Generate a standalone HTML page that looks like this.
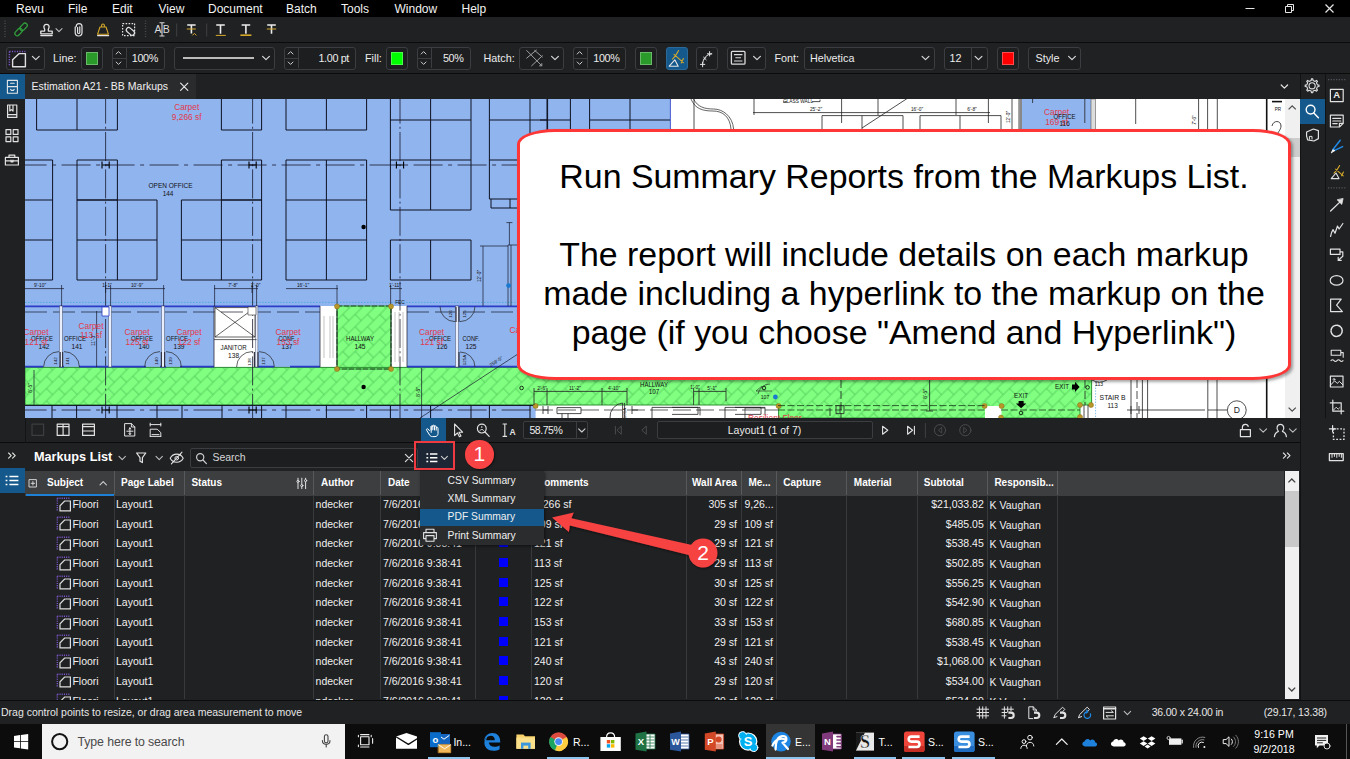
<!DOCTYPE html>
<html><head><meta charset="utf-8"><title>Revu</title>
<style>
*{box-sizing:border-box;margin:0;padding:0}
html,body{width:1350px;height:759px;overflow:hidden;background:#202123;font-family:"Liberation Sans",sans-serif;color:#fff}
.abs{position:absolute}
#menubar{left:0;top:0;width:1350px;height:17px;background:#000}
#menubar span{position:absolute;top:0;font-size:12px;line-height:18.600px;color:#f2f2f2}
#tb1{left:0;top:17px;width:1350px;height:26px;background:#202123;border-bottom:1px solid #0b0b0c}
#tb2{left:0;top:43px;width:1350px;height:31px;background:#202123;border-bottom:1px solid #0b0b0c}
#tb2 .bx{top:4px;height:22.5px;border:1px solid #3c3d40;border-radius:3px;background:#1d1e20}
#tb2 .bx i{position:absolute;left:4px;top:4px;right:4px;bottom:4px;border:1px solid rgba(255,255,255,.3)}
#tb2 .tx{top:4px;font-size:10.8px;line-height:22px;color:#ececec;white-space:nowrap}
#tabbar{left:0;top:74px;width:1300px;height:25px;background:#202123}
#doc{left:25px;top:99px;width:1260px;height:319px;background:#fff;overflow:hidden}
#vscroll{left:1285px;top:99px;width:15px;height:319px;background:#f0f0f0}
#callout{left:516.8px;top:128.7px;width:774.4px;height:251.2px;background:#fff;border:3px solid #ff3636;border-radius:38px/15px;box-shadow:2px 2px 3px rgba(0,0,0,.35);padding-top:25.4px;text-align:center;color:#000;font-size:33.9px;line-height:39px;white-space:nowrap}
#leftbar{left:0;top:99px;width:25px;height:371px;background:#202123}
#right1{left:1300px;top:74px;width:50px;height:626px;background:#202123;border-left:1px solid #111213}
#navbar{left:25px;top:418px;width:1275px;height:25px;background:#202123;border-bottom:1px solid #0b0b0c}
#navbar .nbx{top:3.400px;height:18px;border:1px solid #3c3d40;border-radius:2px;background:#1d1e20}
#navbar .ntx{top:3.400px;font-size:10.500px;line-height:18px;color:#ececec;white-space:nowrap}
#mlbar{left:0;top:443px;width:1300px;height:28px;background:#202123}
#table{left:25px;top:471px;width:1275px;height:229px;background:#202123;overflow:hidden}
#table .th{top:0;font-size:10px;font-weight:700;line-height:24px;color:#fff;white-space:nowrap}
#table .tr{left:0;width:1259px;height:16px;font-size:10.500px;line-height:16px;color:#f0f0f0;white-space:nowrap}
#table .tr span{position:absolute;top:0}
#table .tr i{position:absolute;width:9px;height:9px;background:#0000ff}
#menu{left:420px;top:471px;width:124px;height:74px;background:#2b2c2e;box-shadow:1px 1px 3px rgba(0,0,0,.5)}
#menu span{position:absolute;left:27.600px;font-size:10.300px;line-height:14px;color:#f0f0f0;white-space:nowrap}
#status{left:0;top:700px;width:1350px;height:24px;background:#202123;border-top:1px solid #0b0b0c}
#taskbar{left:0;top:724px;width:1350px;height:35px;background:#0c0c0c}
</style></head><body>
<div id="menubar" class="abs">
<span style="left:16px">Revu</span>
<span style="left:68px">File</span>
<span style="left:112px">Edit</span>
<span style="left:158.5px">View</span>
<span style="left:208px">Document</span>
<span style="left:286px">Batch</span>
<span style="left:341px">Tools</span>
<span style="left:394.5px">Window</span>
<span style="left:461.5px">Help</span>
<svg class="abs" style="left:1240px;top:0" width="110" height="17" viewBox="0 0 110 17" fill="none" stroke="#e6e6e6" stroke-width="1"><path d="M5.5 8.5h9"/><path d="M45.5 6.5h6v6h-6zM47.5 6.5v-2h6v6h-2"/><path d="M85.5 4.5l8 8M93.5 4.5l-8 8" stroke-width="1.2"/></svg>
</div>
<div id="tb1" class="abs">
<svg class="abs" style="left:0;top:0" width="300" height="25" viewBox="0 17 300 25" fill="none" stroke-linecap="round" stroke-linejoin="round">
<path d="M5 20.5v18M145.5 20.5v18" stroke="#4a4b4e" stroke-width="1.4" stroke-dasharray="1 1.6" stroke-linecap="butt"/>
<g stroke="#2f9e3a" stroke-width="1.25"><rect x="-2.3" y="-4.3" width="4.6" height="8.6" rx="2.3" transform="translate(23.6,26.9) rotate(43)"/><rect x="-2.3" y="-4.3" width="4.6" height="8.6" rx="2.3" transform="translate(18.6,32) rotate(43)"/></g>
<g stroke="#e4e4e4" stroke-width="1.3"><path d="M44.6 31.2c.4-1.6 .2-2.4-.5-3.3a2.6 2.6 0 1 1 4.8 0c-.7 .9-.9 1.7-.5 3.3h3.8v2.6h-11.4v-2.6z"/><path d="M40.8 35.6h11.4"/><path d="M56 28.6l3 3 3-3" stroke="#bdbdbd" stroke-width="1.1"/></g>
<path d="M75.2 27v5.6a3.4 3.4 0 0 0 6.8 0v-6a2.9 2.9 0 0 0-5.8 0h0a2.9 2.9 0 0 1 5.8 0M77.6 27.4v5a1.1 1.1 0 0 0 2.2 0v-5.6" stroke="#e4e4e4" stroke-width="1.2"/>
<path d="M76.2 26.6v6a2.4 2.4 0 0 0 4.8 0" stroke="#e4e4e4" stroke-width="0"/>
<path d="M100 27h6l2.4 7.2h-10.8zM101.6 27v-1.6a1.4 1.4 0 0 1 2.8 0V27" stroke="#d6a92b" stroke-width="1.1"/><path d="M97.6 35.6h11" stroke="#e4e4e4" stroke-width="1.3"/>
<rect x="122.6" y="23.6" width="12" height="12" stroke="#e4e4e4" stroke-width="1.2" stroke-dasharray="1.6 1.4" stroke-linecap="butt"/>
<rect x="-4.6" y="-2.4" width="9.2" height="4.8" rx="2.4" transform="translate(130.4,31.4) rotate(40)" fill="#202123" stroke="#e4e4e4" stroke-width="1.2"/>
<path d="M176.7 23.5v13M206.7 23.5v13" stroke="#3f4043" stroke-width="1" stroke-linecap="butt"/>
<g stroke="#ececec" stroke-width="1.6" stroke-linecap="butt"><path d="M187.2 25h8.4M191.4 25v8.6"/><path d="M216.2 25h8.6M220.5 25v8.8"/><path d="M241.6 25h8.6M245.9 25v8.8"/><path d="M267.2 25h8.6M271.5 25v8.8"/></g>
<g stroke="#d6a92b" stroke-width="1" stroke-linecap="butt"><path d="M186.8 29h9M192.4 35.4l2-2 2 2"/><path d="M215.8 35.4h10"/><path d="M240.4 35.2h11" stroke-width="1.6"/><path d="M266.8 29h9.4"/></g>
</svg>
<span class="abs" style="left:154.5px;top:6px;font-size:10.5px;line-height:12px;color:#dcdcdc;letter-spacing:1.2px">AB</span>
<svg class="abs" style="left:158px;top:5px" width="8" height="15" viewBox="0 0 8 15" fill="none" stroke="#d8d8d8" stroke-width="1.1"><path d="M1.5 .8h5M1.5 14h5M4 .8v13.2"/></svg>
</div>
<div id="tb2" class="abs">
<div class="bx abs" style="left:6px;width:38.5px"></div>
<div class="abs tx" style="left:53px">Line:</div>
<div class="bx abs" style="left:80.5px;width:22.0px"><i style="background:#2a9a2a"></i></div>
<div class="bx abs" style="left:112px;width:53px"></div><div class="abs" style="left:125.5px;top:5px;width:1px;height:20px;background:#3c3d40"></div><div class="abs" style="left:113px;top:14.800px;width:12.5px;height:1px;background:#3c3d40"></div><div class="abs tx" style="left:112px;width:46px;text-align:right;letter-spacing:-.35px">100%</div>
<div class="bx abs" style="left:174px;width:101px"></div>
<div class="bx abs" style="left:284px;width:72px"></div><div class="abs" style="left:298px;top:5px;width:1px;height:20px;background:#3c3d40"></div><div class="abs" style="left:285px;top:14.800px;width:13px;height:1px;background:#3c3d40"></div><div class="abs tx" style="left:284px;width:65px;text-align:right;letter-spacing:-.35px">1.00 pt</div>
<div class="abs tx" style="left:365px">Fill:</div>
<div class="bx abs" style="left:386px;width:22px"><i style="background:#00ff00"></i></div>
<div class="bx abs" style="left:417px;width:53.5px"></div><div class="abs" style="left:430.5px;top:5px;width:1px;height:20px;background:#3c3d40"></div><div class="abs" style="left:418px;top:14.800px;width:12.5px;height:1px;background:#3c3d40"></div><div class="abs tx" style="left:417px;width:46.5px;text-align:right;letter-spacing:-.35px">50%</div>
<div class="abs tx" style="left:483.5px">Hatch:</div>
<div class="bx abs" style="left:519px;width:45px"></div>
<div class="bx abs" style="left:573px;width:53px"></div><div class="abs" style="left:586.5px;top:5px;width:1px;height:20px;background:#3c3d40"></div><div class="abs" style="left:574px;top:14.800px;width:12.5px;height:1px;background:#3c3d40"></div><div class="abs tx" style="left:573px;width:46.5px;text-align:right;letter-spacing:-.35px">100%</div>
<div class="bx abs" style="left:635px;width:22px"><i style="background:#2a9a2a"></i></div>
<div class="bx abs" style="left:666px;width:22px;background:#14588c;border-color:#2a6a9a"></div>
<div class="bx abs" style="left:696px;width:22px"></div>
<div class="bx abs" style="left:727px;width:38.5px"></div>
<div class="abs tx" style="left:774.5px">Font:</div>
<div class="bx abs" style="left:803.5px;width:131.5px"></div>
<div class="abs tx" style="left:810px">Helvetica</div>
<div class="bx abs" style="left:944px;width:44px"></div>
<div class="abs" style="left:970.5px;top:4px;width:1px;height:22px;background:#3c3d40"></div>
<div class="abs tx" style="left:949.5px">12</div>
<div class="bx abs" style="left:996.5px;width:22.0px"><i style="background:#ff0000"></i></div>
<div class="bx abs" style="left:1027.5px;width:53.5px"></div>
<div class="abs tx" style="left:1035.5px">Style</div>
<svg class="abs" style="left:0;top:0" width="1350" height="30" viewBox="0 43 1350 30" fill="none" stroke-linecap="round" stroke-linejoin="round">
<path d="M9.4 51.600v14M9.400 51.600h16" stroke="#7b55c7" stroke-width="1.500" stroke-dasharray="1.200 1.300" stroke-linecap="butt"/>
<path d="M12.600 66.800v-7l6.600-6.200h6.200v13.200z" stroke="#dedede" stroke-width="1.400" fill="none"/>
<path d="M32.4 56.3l3.4 3.4 3.4-3.4" stroke="#d8d8d8" stroke-width="1.2" fill="none"/>
<path d="M116.1 54l2.4-2.4 2.4 2.4M116.1 62l2.4 2.4 2.4-2.4" stroke="#cfcfcf" stroke-width="1"/>
<path d="M288.20000000000005 54l2.4-2.4 2.4 2.4M288.20000000000005 62l2.4 2.4 2.4-2.4" stroke="#cfcfcf" stroke-width="1"/>
<path d="M421.20000000000005 54l2.4-2.4 2.4 2.4M421.20000000000005 62l2.4 2.4 2.4-2.4" stroke="#cfcfcf" stroke-width="1"/>
<path d="M577.2 54l2.4-2.4 2.4 2.4M577.2 62l2.4 2.4 2.4-2.4" stroke="#cfcfcf" stroke-width="1"/>
<path d="M183 58h71" stroke="#f0f0f0" stroke-width="1.4" stroke-linecap="butt"/>
<path d="M262.6 56.3l3.4 3.4 3.4-3.4" stroke="#d8d8d8" stroke-width="1.2" fill="none"/>
<path d="M526.700 50.500L541.800 65.800M526.700 58.100L536.400 50.100M534.700 50.500L542.300 57M531.600 65.800L542.300 55.800M541.800 63.600v2.200h-2.200" stroke="#a0a0a0" stroke-width="1"/>
<path d="M551.6 56.3l3.4 3.4 3.4-3.4" stroke="#d8d8d8" stroke-width="1.2" fill="none"/>
<path d="M678.6 50.6c-1.6 3.4-3.4 6.2-6.2 8.6M674 54.4l9.4 8.2M683.4 58.6l-2.2 4.4" stroke="#d6a92b" stroke-width="1.1"/><path d="M669.2 66.2l5.6-6.4 3.4 6.4z" stroke="#e6e6e6" stroke-width="1.1"/>
<path d="M702.6 64.6c.2-6 3.6-10.2 9-10.8M700.4 64.4h4.4M702.6 62.2v4.6M709.6 51.6v4.4M707.4 53.8h4.4M703.6 57.2l2.6 2.6M706.2 57.2l-2.6 2.6" stroke="#e0e0e0" stroke-width="1"/>
<rect x="731.4" y="51.4" width="13.6" height="12.8" rx="1" stroke="#dcdcdc" stroke-width="1.3"/><path d="M734 54.6h8.4M735.4 57.8h5.6M734 61h8.4" stroke="#dcdcdc" stroke-width="1.1" stroke-linecap="butt"/>
<path d="M753.6 56.3l3.4 3.4 3.4-3.4" stroke="#d8d8d8" stroke-width="1.2" fill="none"/>
<path d="M922.1 56.3l3.4 3.4 3.4-3.4" stroke="#d8d8d8" stroke-width="1.2" fill="none"/>
<path d="M975.1 56.3l3.4 3.4 3.4-3.4" stroke="#d8d8d8" stroke-width="1.2" fill="none"/>
<path d="M1068.6 56.3l3.4 3.4 3.4-3.4" stroke="#d8d8d8" stroke-width="1.2" fill="none"/>
</svg>
</div>
<div id="tabbar" class="abs">
<div class="abs" style="left:0;top:0;width:24.5px;height:25px;background:#14588c"></div>
<div class="abs" style="left:25px;top:0;width:171px;height:25px;background:#2a2b2d"></div>
<div class="abs" style="left:31.5px;top:0;font-size:10.5px;line-height:24px;color:#f0f0f0;white-space:nowrap">Estimation A21 - BB Markups</div>
<svg class="abs" style="left:0;top:0" width="1300" height="25" viewBox="0 74 1300 25" fill="none" stroke="#e6e6e6" stroke-linecap="round" stroke-linejoin="round">
<path d="M180.6 83.2l7.2 7.2M187.8 83.2l-7.2 7.2" stroke-width="1.2"/>
<path d="M7.4 80.4h10v12.8h-10zM7.4 86.6h10M10.6 83.2h3.6M10.6 89.4l.8 1h2l.8-1" stroke-width="1.1"/>
<path d="M1281.2 85l3.2 3.2 3.2-3.2" stroke-width="1.2"/>
</svg>
</div>
<div id="doc" class="abs"><svg width="1260" height="319" viewBox="25 99 1260 319" style="display:block" font-family="Liberation Sans, sans-serif">
<defs><pattern id="hb" width="17.46" height="17.46" patternUnits="userSpaceOnUse" patternTransform="translate(104.9,404.1) rotate(-45)"><path d="M0 0h17.46M0 8.73h17.46M0 17.46h17.46M4.66 0v8.73M13.39 8.73v8.73" stroke="#4fc658" stroke-width=".75" fill="none"/></pattern></defs>
<rect x="25" y="99" width="1260" height="319" fill="#fff"/>
<rect x="25" y="99" width="645.4" height="319" fill="#90b4ee"/>
<rect x="1021.8" y="99" width="69.4" height="40" fill="#90b4ee"/>
<path d="M214 306h42.6v61h-42.6zM320 306h17v61h-17zM391 306h16v61h-16zM535.6 405h250v13h-250z" fill="#fff"/>
<path d="M25 367.4H1091.6V405H1080V418H778.6V405H25zM337 306h54v63h-54z" fill="#80ff80"/><path d="M25 367.4H1091.6V405H1080V418H778.6V405H25zM337 306h54v63h-54z" fill="url(#hb)" stroke="#2d8f33" stroke-width="1"/>
<rect x="985" y="406" width="16.5" height="12" fill="#fff"/>
<path d="M36.6 98V130M77 98V130M117.4 98V130M36.6 130H117.4M221.4 98V130M261.6 98V130M221.4 130H261.6M286 98V130M326.4 98V130M366.6 98V130M286 130H366.6M25 160H52.6V280H25M25 200H52.6M25 240H52.6M77 160V200M117.4 160V200M77 160H117.4M77 200H117.4M77 200V280M117.4 200V280M157 200V280M77 200H157M77 240H157M77 280H157M221.4 160V200M261.6 160V200M221.4 160H261.6M221.4 200H261.6M181.4 200V280M221.4 200V280M261.6 200V280M181.4 200H261.6M181.4 240H261.6M181.4 280H261.6M286 160V280M326.4 160V280M366.6 160V280M286 160H366.6M286 200H366.6M286 240H366.6M286 280H366.6M390.4 98V210M430.6 98V210M471 98V210M390.4 120H471M390.4 160H471M390.4 210H471M390.4 240V280M430.6 240V280M471 240V280M390.4 240H471M390.4 280H471M489.4 98V199M530 98V160M547 98V140M489.4 120H547M489.4 160H530M489.4 199H520M491 199v9h26M510 199v9M547.6 98V130M570.4 98V130M540 120H570.4M589.6 98V130M630 98V130M589.6 120H670M25 405.4H535M52 405.4V418M76.6 405.4V418M117 405.4V418M157 405.4V418M182 405.4V418M222 405.4V418M261.6 405.4V418M286 405.4V418M326.4 405.4V418M366.6 405.4V418M390.4 405.4V418M430.6 405.4V418M471 405.4V418M489.4 405.4V418M530 405.4V418" stroke="#0e1020" stroke-width="1" fill="none"/>
<path d="M105.6 99V418M252.6 99V418M400 99V418" stroke="#16182a" stroke-width=".8" fill="none" stroke-dasharray="29 3.2 2 3.2" stroke-dashoffset="4.4"/>
<path d="M25 165H517M25 410H535" stroke="#16182a" stroke-width=".8" fill="none" stroke-dasharray="29 5.5 4 5.5" stroke-dashoffset="7.4"/>
<path d="M25 312H320M407 312H517" stroke="#16182a" stroke-width=".7" fill="none" stroke-dasharray="22 6"/>
<path d="M102.0 161.6v6.8M109.19999999999999 161.6v6.8M102.0 165h7.2" stroke="#000" stroke-width="1.1" fill="none"/>
<path d="M249.0 161.6v6.8M256.2 161.6v6.8M249.0 165h7.2" stroke="#000" stroke-width="1.1" fill="none"/>
<path d="M396.4 161.6v6.8M403.6 161.6v6.8M396.4 165h7.2" stroke="#000" stroke-width="1.1" fill="none"/>
<path d="M102.0 406.6v6.8M109.19999999999999 406.6v6.8M102.0 410h7.2" stroke="#000" stroke-width="1.1" fill="none"/>
<path d="M249.0 406.6v6.8M256.2 406.6v6.8M249.0 410h7.2" stroke="#000" stroke-width="1.1" fill="none"/>
<path d="M25 302.4H517" stroke="#4aa6e0" stroke-width=".8" stroke-dasharray="1.6 1.4" fill="none"/>
<path d="M25 306.4H320M407 306.4H517M25 366.6H43M59 366.6H64M79 366.6H146M160 366.6H166M180 366.6H214M256 366.6H274M290 366.6H320M407 366.6H517" stroke="#2a3cc8" stroke-width="1.6" fill="none"/>
<rect x="59.7" y="306" width="2.6" height="61" fill="#e8eefc" stroke="#55596a" stroke-width=".5"/>
<rect x="108.7" y="306" width="2.6" height="61" fill="#e8eefc" stroke="#55596a" stroke-width=".5"/>
<rect x="161.7" y="306" width="2.6" height="61" fill="#e8eefc" stroke="#55596a" stroke-width=".5"/>
<rect x="255.3" y="306" width="2.6" height="61" fill="#e8eefc" stroke="#55596a" stroke-width=".5"/>
<rect x="455.7" y="306" width="2.6" height="61" fill="#e8eefc" stroke="#55596a" stroke-width=".5"/>
<path d="M214 306v61M320 306v61M337 306v63M391 306v63M407 306v61" stroke="#2a2c3c" stroke-width=".8" fill="none"/>
<path d="M215 307.6h40v29.4h-40zM215 307.6l40 29.4M255 307.6l-40 29.4M214 339.6h42.6" stroke="#222" stroke-width=".7" fill="none"/>
<path d="M102 307h7v9h-7z" fill="#fff" stroke="#2a3cc8" stroke-width=".8"/>
<path d="M248 307h8v8h-8z" fill="#fff" stroke="#333" stroke-width=".6"/>
<path d="M324 316v42M330 316v42M333 316v42M395 312v50M399 312v50M403 312v50" stroke="#9a9a9a" stroke-width=".6" fill="none"/>
<path d="M337 306h54v63h-54z" stroke="#1e3a1e" stroke-width=".8" fill="none" stroke-dasharray="5 2"/>
<path d="M59 351.6A15.4 15.4 0 0 0 43.6 367M64 351.6A15.4 15.4 0 0 1 79.4 367M160 351.6A15.4 15.4 0 0 0 144.6 367M166 351.6A15.4 15.4 0 0 1 181.4 367M252 351.6A15.4 15.4 0 0 0 236.6 367M259 351.6A15.4 15.4 0 0 1 274.4 367M455 321.6A15 15 0 0 1 440 306.6M460 321.6A15 15 0 0 0 475 306.6M460 352A15 15 0 0 1 475 367" stroke="#222" stroke-width=".7" fill="none"/>
<path d="M60.2 352v15M62.6 352v15M161.4 352v15M164.6 352v15M254.4 352v15M258 352v15M456 307v15M459 307v15M459 352v15" stroke="#334" stroke-width="1.2" fill="none"/>
<path d="M25 288.6H64M61.6 285v21M105 288.6H165M105.6 285v8M110.6 285v21M163.6 285v21M214 288.6H258M214.6 285v21M252 285v8M256.6 285v21M286 288.6H338M337 285v21M390 288.6H402M390.6 285v21" stroke="#16182a" stroke-width=".7" fill="none"/>
<path d="M483 246V306M480 246h28M509.4 222.6V245M506.4 222.6h6M508 245V306M511 245V306M508 245h9M96.6 311V367M34 370V405M421.6 368V418M420 418L517 354.6" stroke="#16182a" stroke-width=".7" fill="none"/>
<circle cx="363.6" cy="227" r="2.2" fill="#000"/><circle cx="363.6" cy="387" r="2.2" fill="#000"/><circle cx="508.6" cy="285.6" r="2.4" fill="#1a7ad0"/>
<circle cx="337" cy="306.4" r="2.5" fill="#b8962a" stroke="#8a6c10" stroke-width=".5"/>
<circle cx="391" cy="306.4" r="2.5" fill="#b8962a" stroke="#8a6c10" stroke-width=".5"/>
<circle cx="337" cy="369" r="2.5" fill="#b8962a" stroke="#8a6c10" stroke-width=".5"/>
<circle cx="391" cy="369" r="2.5" fill="#b8962a" stroke="#8a6c10" stroke-width=".5"/>
<circle cx="535.6" cy="406" r="2.5" fill="#b8962a" stroke="#8a6c10" stroke-width=".5"/>
<circle cx="778.6" cy="406" r="2.5" fill="#b8962a" stroke="#8a6c10" stroke-width=".5"/>
<circle cx="984.6" cy="406" r="2.5" fill="#b8962a" stroke="#8a6c10" stroke-width=".5"/>
<circle cx="1001.6" cy="406" r="2.5" fill="#b8962a" stroke="#8a6c10" stroke-width=".5"/>
<circle cx="1001" cy="417.6" r="2.5" fill="#b8962a" stroke="#8a6c10" stroke-width=".5"/>
<circle cx="1080" cy="405" r="2.5" fill="#b8962a" stroke="#8a6c10" stroke-width=".5"/>
<circle cx="1091" cy="405" r="2.5" fill="#b8962a" stroke="#8a6c10" stroke-width=".5"/>
<circle cx="1080" cy="417" r="2.5" fill="#b8962a" stroke="#8a6c10" stroke-width=".5"/>
<text x="170.5" y="188.4" font-size="6.4" fill="#111" text-anchor="middle" textLength="44" lengthAdjust="spacingAndGlyphs">OPEN OFFICE</text>
<text x="168" y="196" font-size="6.4" fill="#111" text-anchor="middle" >144</text>
<text x="42" y="341.4" font-size="6.6" fill="#111" text-anchor="middle" textLength="22" lengthAdjust="spacingAndGlyphs">OFFICE</text>
<text x="44" y="348.6" font-size="6.6" fill="#111" text-anchor="middle" >142</text>
<text x="75" y="341.4" font-size="6.6" fill="#111" text-anchor="middle" textLength="22" lengthAdjust="spacingAndGlyphs">OFFICE</text>
<text x="77" y="348.6" font-size="6.6" fill="#111" text-anchor="middle" >141</text>
<text x="142" y="341.4" font-size="6.6" fill="#111" text-anchor="middle" textLength="22" lengthAdjust="spacingAndGlyphs">OFFICE</text>
<text x="144" y="348.6" font-size="6.6" fill="#111" text-anchor="middle" >140</text>
<text x="177" y="341.4" font-size="6.6" fill="#111" text-anchor="middle" textLength="22" lengthAdjust="spacingAndGlyphs">OFFICE</text>
<text x="179" y="348.6" font-size="6.6" fill="#111" text-anchor="middle" >139</text>
<text x="233.6" y="350.4" font-size="6.6" fill="#111" text-anchor="middle" textLength="26" lengthAdjust="spacingAndGlyphs">JANITOR</text>
<text x="233.6" y="357.6" font-size="6.6" fill="#111" text-anchor="middle" >138</text>
<text x="287" y="341.4" font-size="6.6" fill="#111" text-anchor="middle" textLength="17" lengthAdjust="spacingAndGlyphs">CONF.</text>
<text x="287" y="348.6" font-size="6.6" fill="#111" text-anchor="middle" >137</text>
<text x="360" y="341.4" font-size="6.6" fill="#111" text-anchor="middle" textLength="28" lengthAdjust="spacingAndGlyphs">HALLWAY</text>
<text x="360" y="348.6" font-size="6.6" fill="#111" text-anchor="middle" >145</text>
<text x="440" y="341.4" font-size="6.6" fill="#111" text-anchor="middle" textLength="22" lengthAdjust="spacingAndGlyphs">OFFICE</text>
<text x="442" y="348.6" font-size="6.6" fill="#111" text-anchor="middle" >126</text>
<text x="471" y="341.4" font-size="6.6" fill="#111" text-anchor="middle" textLength="17" lengthAdjust="spacingAndGlyphs">CONF.</text>
<text x="471" y="348.6" font-size="6.6" fill="#111" text-anchor="middle" >125</text>
<text x="186.7" y="110" font-size="8.4" fill="#e23a4c" text-anchor="middle" >Carpet</text>
<text x="186.7" y="119.6" font-size="8.4" fill="#e23a4c" text-anchor="middle" >9,266 sf</text>
<text x="36" y="335.4" font-size="8.4" fill="#e23a4c" text-anchor="middle" >Carpet</text>
<text x="36" y="345.0" font-size="8.4" fill="#e23a4c" text-anchor="middle" >121 sf</text>
<text x="91" y="328.6" font-size="8.4" fill="#e23a4c" text-anchor="middle" >Carpet</text>
<text x="91" y="338.20000000000005" font-size="8.4" fill="#e23a4c" text-anchor="middle" >113 sf</text>
<text x="137" y="335.4" font-size="8.4" fill="#e23a4c" text-anchor="middle" >Carpet</text>
<text x="137" y="345.0" font-size="8.4" fill="#e23a4c" text-anchor="middle" >125 sf</text>
<text x="189" y="335.4" font-size="8.4" fill="#e23a4c" text-anchor="middle" >Carpet</text>
<text x="189" y="345.0" font-size="8.4" fill="#e23a4c" text-anchor="middle" >122 sf</text>
<text x="288" y="335.4" font-size="8.4" fill="#e23a4c" text-anchor="middle" >Carpet</text>
<text x="288" y="345.0" font-size="8.4" fill="#e23a4c" text-anchor="middle" >153 sf</text>
<text x="431.6" y="335.4" font-size="8.4" fill="#e23a4c" text-anchor="middle" >Carpet</text>
<text x="431.6" y="345.0" font-size="8.4" fill="#e23a4c" text-anchor="middle" >121 sf</text>
<text x="522" y="333" font-size="8.4" fill="#e23a4c" text-anchor="middle" >Carpet</text>
<text x="522" y="342.6" font-size="8.4" fill="#e23a4c" text-anchor="middle" >2</text>
<text x="1056.6" y="115" font-size="8.4" fill="#e23a4c" text-anchor="middle" >Carpet</text>
<text x="1056.6" y="124.6" font-size="8.4" fill="#e23a4c" text-anchor="middle" >169 sf</text>
<text x="40" y="287" font-size="4.8" fill="#111" text-anchor="middle" >9'-10"</text>
<text x="107" y="287" font-size="4.8" fill="#111" text-anchor="middle" >1'-1"</text>
<text x="137" y="287" font-size="4.8" fill="#111" text-anchor="middle" >10'-9"</text>
<text x="233" y="287" font-size="4.8" fill="#111" text-anchor="middle" >7'-8"</text>
<text x="255.6" y="287" font-size="4.8" fill="#111" text-anchor="middle" >1'-0"</text>
<text x="303" y="287" font-size="4.8" fill="#111" text-anchor="middle" >16'-1"</text>
<text x="395" y="287" font-size="4.8" fill="#111" text-anchor="middle" >1'-11"</text>
<text x="400" y="303.6" font-size="4.8" fill="#111" text-anchor="middle" >FEC</text>
<text transform="translate(481,276) rotate(-90)" font-size="4.8" fill="#111" text-anchor="middle">12'-0"</text>
<text transform="translate(32,388) rotate(-90)" font-size="4.8" fill="#111" text-anchor="middle">8'-5"</text>
<text transform="translate(420,392) rotate(-90)" font-size="4.8" fill="#111" text-anchor="middle">8'-5"</text>
<text transform="translate(95,340) rotate(-90)" font-size="4.8" fill="#111" text-anchor="middle">11'-3"</text>
<text transform="translate(497,363) rotate(-33)" font-size="4.8" fill="#111" text-anchor="middle">259'-5"</text>
<text transform="translate(56.6,361) rotate(-90)" font-size="4.4" fill="#111" text-anchor="middle">142</text>
<text transform="translate(69,361) rotate(-90)" font-size="4.4" fill="#111" text-anchor="middle">141</text>
<text transform="translate(157.6,361) rotate(-90)" font-size="4.4" fill="#111" text-anchor="middle">140</text>
<text transform="translate(171.6,361) rotate(-90)" font-size="4.4" fill="#111" text-anchor="middle">139</text>
<text transform="translate(250.6,362) rotate(-90)" font-size="4.4" fill="#111" text-anchor="middle">138</text>
<text transform="translate(264.6,361) rotate(-90)" font-size="4.4" fill="#111" text-anchor="middle">137</text>
<text transform="translate(452,314) rotate(-90)" font-size="4.4" fill="#111" text-anchor="middle">126</text>
<text transform="translate(465.6,314) rotate(-90)" font-size="4.4" fill="#111" text-anchor="middle">125</text>
<text transform="translate(465.6,360) rotate(-90)" font-size="4.4" fill="#111" text-anchor="middle">125A</text>
<path d="M694 99V129M753 112.6H990M754 99v16M841.6 99V123M878 99V115M956 99V115M988.4 99V123M822 129V115.6H903V129M862 115.6V129M920 129V115.6H1001V129M960 115.6V129M862 128L907 98.6M1012 99V130M1019 99V130M1084.8 99V123M1032.6 99V103M1135.7 99V124M1198.6 99V130M1207.6 99V130M1217.3 99V130M783 102h4M812 101.6h8v-2" stroke="#222" stroke-width=".8" fill="none"/>
<path d="M691 99c4 10 12 12 22 12s17 6 18 18M693.6 99c4 8 11 10 20 10s19 7 20 20" stroke="#222" stroke-width=".7" fill="none"/>
<rect x="1019.4" y="99" width="2.6" height="31" fill="#888"/><rect x="1091" y="99" width="4.6" height="31" fill="#ddd" stroke="#444" stroke-width=".5"/>
<path d="M1266.7 99V418" stroke="#111" stroke-width="1.6"/><path d="M1272 101.6h10" stroke="#111" stroke-width="1.6"/><path d="M670.4 99V130" stroke="#2a3cc8" stroke-width=".8"/>
<text x="798" y="103.4" font-size="4.8" fill="#111" text-anchor="middle" >GLASS WALL</text>
<text x="816" y="110.6" font-size="4.8" fill="#111" text-anchor="middle" >25'-2"</text>
<text x="917" y="110.6" font-size="4.8" fill="#111" text-anchor="middle" >16'-0"</text>
<text x="972" y="110.6" font-size="4.8" fill="#111" text-anchor="middle" >6'-8"</text>
<text x="1278" y="111.2" font-size="4.6" fill="#111" text-anchor="middle" >PR</text>
<text transform="translate(1010,117) rotate(-90)" font-size="4.8" fill="#111" text-anchor="middle">12'-0"</text>
<text transform="translate(1196,120) rotate(-90)" font-size="4.8" fill="#111" text-anchor="middle" font-style="italic">7'-0"</text>
<path d="M1272 126c1-6 9-6 9 0c0 4-4 7-6 12" stroke="#333" stroke-width=".9" fill="none"/>
<text x="1064.6" y="119" font-size="6.4" fill="#111" text-anchor="middle" textLength="22" lengthAdjust="spacingAndGlyphs">OFFICE</text>
<text x="1064.6" y="126" font-size="6.4" fill="#111" text-anchor="middle" >116</text>
<path d="M534 391.4H627M534 388v17M547 388v17M602 388v17M627 388v17M693.6 391.4H726M693.6 388v17M699 388v17M726 388v13M543 406v8M548 406v8M543 410h5M557 407.6h24v6h-24zM562 413.6v4.4M568 413.6v4.4M622.6 403v15M624.6 403v15M632 406v8M632 410h6M610 418A14 14 0 0 1 622.6 403M652 418v-10.6h48v8M672 407.4h26v7h-26M725 418v-10.6h40v8M735 407.4h26v7h-26M929.6 380V411M926 411h7M830 408v8M836 405.6h8v8h-8zM840 405.6v8M1131 380V418M1142.4 380V418M1147.6 380V418M1207.8 380V418M1217 380V418M1127 410H1205M1208 410H1227M1131 406v8M1139 406v8M1092 380A15 15 0 0 0 1107 380M1084 405v13M1088 405v13" stroke="#222" stroke-width=".8" fill="none"/>
<path d="M535 410H778" stroke="#222" stroke-width=".7" stroke-dasharray="18 5" fill="none"/>
<path d="M778 405.6H985M778 410H985M1001 410H1080" stroke="#1c3a1c" stroke-width=".8" stroke-dasharray="7 2.5" fill="none"/>
<path d="M841 380V418M1085 380V405M1137 380V418" stroke="#222" stroke-width=".8" stroke-dasharray="8 3" fill="none"/>
<path d="M1095.6 382V418" stroke="#4aa6e0" stroke-width=".7" stroke-dasharray="1.4 1.4" fill="none"/>
<circle cx="1236.8" cy="410.2" r="9.4" fill="#fff" stroke="#222" stroke-width=".8"/>
<text x="1236.8" y="413.4" font-size="8.6" fill="#222" text-anchor="middle" >D</text>
<text x="542" y="390" font-size="4.8" fill="#111" text-anchor="middle" >2'-6"</text>
<text x="575" y="390" font-size="4.8" fill="#111" text-anchor="middle" >11'-2"</text>
<text x="614" y="390" font-size="4.8" fill="#111" text-anchor="middle" >4'-10"</text>
<text x="654" y="386.6" font-size="6.4" fill="#111" text-anchor="middle" textLength="28" lengthAdjust="spacingAndGlyphs">HALLWAY</text>
<text x="654" y="393.6" font-size="6.4" fill="#111" text-anchor="middle" >107</text>
<text x="695" y="389" font-size="4.8" fill="#111" text-anchor="middle" >1'-0"</text>
<text x="712" y="390" font-size="4.8" fill="#111" text-anchor="middle" >5'-1"</text>
<text x="765" y="399" font-size="5" fill="#111" text-anchor="middle" >107</text>
<text x="1021" y="398.4" font-size="6.4" fill="#111" text-anchor="middle" textLength="14" lengthAdjust="spacingAndGlyphs">EXIT</text>
<text x="1062" y="389" font-size="6.4" fill="#111" text-anchor="middle" textLength="14" lengthAdjust="spacingAndGlyphs">EXIT</text>
<text x="1112.6" y="400.4" font-size="6.4" fill="#111" text-anchor="middle" textLength="26" lengthAdjust="spacingAndGlyphs">STAIR B</text>
<text x="1112.6" y="407.6" font-size="6.4" fill="#111" text-anchor="middle" >113</text>
<text x="1099" y="386" font-size="5" fill="#111" text-anchor="middle" >113</text>
<text transform="translate(625.6,413) rotate(-90)" font-size="4.4" fill="#111" text-anchor="middle">101A</text>
<text transform="translate(927,394) rotate(-90)" font-size="4.8" fill="#111" text-anchor="middle">8'-5"</text>
<path d="M1018.6 401h5v2.6h2.6l-5.1 4.6l-5.1-4.6h2.6zM1072 384.4h3v-2.6l4.6 5.1l-4.6 5.1v-2.6h-3z" fill="#000"/>
<circle cx="521.6" cy="388" r="1.8" fill="none" stroke="#000" stroke-width=".8"/><circle cx="764" cy="388" r="1.8" fill="none" stroke="#000" stroke-width=".8"/><circle cx="1021" cy="413" r="1.8" fill="none" stroke="#000" stroke-width=".8"/><circle cx="1087.6" cy="387.4" r="1.8" fill="none" stroke="#000" stroke-width=".8"/>
<circle cx="775.4" cy="397" r="2.4" fill="#1a7ad0"/>
<path d="M745 418v-10h20" stroke="#222" stroke-width=".7" fill="none"/><path d="M762 386l-6 5h16M758 394A12 12 0 0 1 770 384" stroke="#222" stroke-width=".6" fill="none"/>
<text x="748" y="420.6" font-size="8.4" fill="#e23a4c">Resilient Floor</text>
</svg></div>
<div id="vscroll" class="abs"><div class="abs" style="left:0;top:38.5px;width:15px;height:19.5px;background:#cdcdcd"></div><svg class="abs" style="left:0;top:0" width="15" height="319" viewBox="0 0 15 319" fill="none" stroke="#505050" stroke-width="1.3"><path d="M3.6 10.4l3.6-3.6 3.6 3.6M3.6 308.6l3.6 3.6 3.6-3.6"/></svg></div>
<div id="callout" class="abs"><p>Run Summary Reports from the Markups List.</p><p>&nbsp;</p><p>The report will include details on each markup</p><p>made including a hyperlink to the markup on the</p><p>page (if you choose "Amend and Hyperlink")</p></div>
<div id="leftbar" class="abs"><svg width="25" height="371" viewBox="0 99 25 371" fill="none" stroke="#e2e2e2" stroke-width="1.2" stroke-linejoin="round" stroke-linecap="round">
<path d="M7.6 105h9.2v12.4h-9.2zM7.6 114.6h9.2M9.8 105v6l1.6-1.4 1.6 1.4v-6"/>
<path d="M6 129.6h4.8v4.8h-4.8zM13.2 129.6h4.8v4.8h-4.8zM6 136.8h4.8v4.8h-4.8zM13.2 136.8h4.8v4.8h-4.8z"/>
<path d="M5.4 157.4h13v7.6h-13zM9 157.4v-2.2h5.8v2.2M5.4 160.8h13M11 160v1.8h2v-1.8"/>
<path d="M8.6 452.6l2.6 2.6-2.6 2.6M12.6 452.6l2.6 2.6-2.6 2.6" stroke-width="1.1"/>
</svg></div>
<div class="abs" style="left:0;top:468px;width:24.5px;height:24.8px;background:#14588c;z-index:2"><svg width="25" height="25" viewBox="0 0 25 25" fill="none" stroke="#fff" stroke-width="1.5"><path d="M9.4 8.4h9M9.4 12.4h9M9.4 16.4h9"/><path d="M5.6 8.4h1.8M5.6 12.4h1.8M5.6 16.4h1.8"/></svg></div>
<div id="right1" class="abs"></div>
<div class="abs" style="left:1325px;top:74px;width:1px;height:344px;background:#111213"></div>
<div class="abs" style="left:1300px;top:99px;width:25px;height:24.6px;background:#14588c"></div>
<svg class="abs" style="left:1300px;top:74px" width="50" height="400" viewBox="1300 74 50 400" fill="none" stroke="#e2e2e2" stroke-width="1.2" stroke-linejoin="round" stroke-linecap="round">
<path d="M1317.4 84.9L1319.0 85.1L1319.0 86.5L1317.4 86.7L1316.5 88.9L1317.5 90.2L1316.5 91.2L1315.2 90.2L1313.0 91.1L1312.8 92.7L1311.4 92.7L1311.2 91.1L1309.0 90.2L1307.7 91.2L1306.7 90.2L1307.7 88.9L1306.8 86.7L1305.2 86.5L1305.2 85.1L1306.8 84.9L1307.7 82.7L1306.7 81.4L1307.7 80.4L1309.0 81.4L1311.2 80.5L1311.4 78.9L1312.8 78.9L1313.0 80.5L1315.2 81.4L1316.5 80.4L1317.5 81.4L1316.5 82.7Z" stroke-width="1.1"/><circle cx="1312.1" cy="85.8" r="3.1" stroke-width="1.1"/>
<circle cx="1310.6" cy="109.6" r="4.4" stroke="#fff" stroke-width="1.4"/><path d="M1313.8 113l4.6 4.8" stroke="#fff" stroke-width="1.4"/>
<path d="M1306.6 132l6.8-3 5 1.6v8l-4.4 2.4-6.4-1.2c-1-2.6-1.4-5-1-7.800z"/><path d="M1309.4 139.200v-2.800h2.6v2.600" stroke-width="1"/>
<path d="M1328 79.600h18.500M1328 187.800h18.500" stroke="#55565a" stroke-width="1.2" stroke-dasharray="1.2 1.5" stroke-linecap="butt"/>
<rect x="1330.4" y="89.400" width="12.800" height="12.200" stroke-width="1.2"/>
<path d="M1330.4 115.200h12.800v8.200l-3.800 3.600h-9zM1343.200 123.400h-3.800v3.600M1332.800 118.400h8M1332.800 121h8M1332.800 123.600h4.400"/>
<path d="M1340.200 140.200l-7.400 9.600M1342.600 146.600l-8 3.800" stroke="#1e8ae6" stroke-width="1.500"/><path d="M1331.400 152.600l1.400-2.800 1.800.600z" stroke="#fff" fill="#fff" stroke-width=".8"/>
<path d="M1339.600 165.600c-1.400 3-3 5.400-5.600 7.600M1335.600 169.200l7.600 6.600M1343.400 172l-1.800 3.800" stroke="#d6a92b" stroke-width="1.100"/><path d="M1331.200 178.600l4.800-5.600 3 5.600z" stroke-width="1.100"/>
<path d="M1330.600 211l10-9.600" stroke-width="1.300"/><path d="M1343 198.800l-1.200 5.600-4.400-4.400z" fill="#e2e2e2" stroke-width=".8"/>
<path d="M1330.600 236.400c.4-2.800 1.200-5 2.400-6.800l2 3.600 2.500-7.200 1.600 3 3.800-5.500"/>
<path d="M1330.400 249.200h9.600v5.200h-9.600zM1340 251.800h2.800v4.400l-4.600 4.200M1338.200 257.400v3h3" stroke-width="1.200"/>
<ellipse cx="1336.600" cy="280.400" rx="6.400" ry="4.800"/>
<path d="M1330.600 299.200h10.600l-4.600 6 5.800 6.400h-11.800z"/>
<circle cx="1336.600" cy="330.800" r="5.600" stroke-width="1.500" stroke-dasharray="3.300 1.100"/>
<path d="M1331.200 350.200h9.600v5h-9.600zM1340.800 352.600h2.400v4.600M1331 360.600c1-1.200 2-1.200 3 0s2 1.200 3 0 2-1.200 3 0 2 1.200 3 0" stroke-width="1.100"/>
<rect x="1330.400" y="376.200" width="12.600" height="10.800" stroke-width="1.200"/><path d="M1330.600 385l4-4.200 2.600 2.600 2.200-2 3.400 3.400" stroke-width="1"/><circle cx="1334" cy="379.400" r=".9" stroke-width=".8"/>
<path d="M1332.800 400.200v11h11M1330.200 402.800h11v11" stroke-width="1.200"/><path d="M1333.400 410.200l2.800-3 2 2 1.400-1.400" stroke-width=".9"/>
<path d="M1333.400 428.800h10.600v10.600h-10.600z" stroke-width="1.300" stroke-dasharray="1.800 1.600" stroke-linecap="butt"/><path d="M1329.400 428.800h6.400M1332.600 425.600v6.400" stroke-width="1.200"/>
<rect x="1329.400" y="453.600" width="13.800" height="7" stroke-width="1.300"/><path d="M1332 454v3.400M1334.400 454v2.400M1336.800 454v3.400M1339.200 454v2.400M1341.400 454v3.400" stroke-width="1"/>
</svg>
<span class="abs" style="left:1330.400px;top:89.400px;width:12.800px;text-align:center;font-size:9.500px;line-height:12.600px;font-weight:700;color:#eee">A</span>
<div id="navbar" class="abs">
<div class="abs" style="left:396px;top:0;width:25.4px;height:23px;background:#14588c"></div>
<div class="nbx abs" style="left:498.400px;width:65px"></div><div class="abs" style="left:550.500px;top:3.400px;width:1px;height:18px;background:#3c3d40"></div>
<div class="abs ntx" style="left:504.400px;letter-spacing:-.45px">58.75%</div>
<div class="nbx abs" style="left:631.500px;width:216px"></div>
<div class="abs ntx" style="left:631.500px;width:216px;text-align:center">Layout1 (1 of 7)</div>
<svg class="abs" style="left:0;top:0" width="1275" height="25" viewBox="25 418 1275 25" fill="none" stroke="#e2e2e2" stroke-width="1.200" stroke-linejoin="round" stroke-linecap="round">
<rect x="32" y="424.200" width="11.600" height="11.200" stroke="#3d3e41"/>
<path d="M57.200 424.200h11.800v11.200h-11.800zM63.100 424.200v11.200M57.200 426.600h11.800" />
<path d="M82.600 424.200h11.800v11.200h-11.800zM82.600 426.600h11.800M82.600 431h11.800"/>
<path d="M125 423.600h6.400l3.400 3.400v9h-9.800zM131.400 423.600v3.400h3.400M129.900 428v6.400M126.800 431.200h6.200M129.900 428l-1 1M129.900 428l1 1M129.900 434.400l-1-1M129.900 434.400l1-1" stroke-width="1"/>
<path d="M150.200 423.200v2.800M160.800 423.200v2.800M150.200 424.600h10.600M150.200 436.400v-7.200h7l3.600 3.400v3.800M150.200 436.400h10.600M152 434.600h7" stroke-width="1"/>
<path d="M429.400 430.600l-1.400-1.600c-.8-.8-2 .2-1.400 1.200l3 4.800c.6 1 1.600 1.600 2.800 1.600h2.600c1.800 0 3-1.400 3-3v-5.400c0-1.200-1.700-1.200-1.700 0v-1.400c0-1.200-1.700-1.200-1.700 0v-.8c0-1.200-1.700-1.200-1.700 0v.6c0-1.200-1.700-1.200-1.700 0v5.800M431.100 426.600v3.400M432.800 426v3.800M434.500 426.800v3.200M436.200 428.200v2" stroke="#fff" stroke-width="1"/>
<path d="M454.600 424v11.600l2.800-2.800 2 4 1.600-.8-2-3.800h3.600z" stroke-width="1.100"/>
<circle cx="481.800" cy="428.600" r="4.400"/><path d="M485 432l4.200 4.400"/><path d="M480 430.400c.4-1.400 3.200-1.400 3.600 0M481.800 426.400v1.200" stroke-width=".9"/>
<path d="M503 424h3.600M503 436.400h3.600M504.800 424v12.400" stroke-width="1.100"/>
<path d="M1282 419" />
<path d="M578.600 428.800l3.200 3.200 3.200-3.200" stroke="#cfcfcf" stroke-width="1.100"/>
<path d="M615.400 426.400v7.600M621 426.400l-4 3.800 4 3.800zM646 426.400l-4.200 3.800 4.200 3.800z" stroke="#4a4b4e" stroke-width="1"/>
<path d="M882.600 426.200l5.200 4-5.200 4zM907.600 426.200l5 4-5 4zM914.400 426.200v8" stroke-width="1.100"/>
<path d="M925.400 423.400v14" stroke="#3f4043" stroke-width="1"/>
<circle cx="940" cy="430.200" r="5.600" stroke="#4a4b4e" stroke-width="1"/><path d="M941.400 427.600l-3 2.600 3 2.600z" stroke="#4a4b4e" stroke-width=".9"/><circle cx="965.300" cy="430.200" r="5.600" stroke="#4a4b4e" stroke-width="1"/><path d="M964 427.600l3 2.600-3 2.600z" stroke="#4a4b4e" stroke-width=".9"/>
<path d="M1240.400 429.600h10v7h-10zM1242.400 429.600v-2.400c0-3.600 5.400-3.600 5.800-.8" stroke-width="1.200"/><path d="M1259.800 428.800l3.400 3.400 3.400-3.400" stroke="#bdbdbd" stroke-width="1.100"/>
<path d="M1274.400 436.600c.4-3.200 2-4.400 4-5.200c-2.600-2.400-1.400-7 2-7s4.600 4.600 2 7c2 .8 3.600 2 4 5.200" stroke-width="1.200"/><path d="M1289.400 428.800l3.400 3.400 3.400-3.400" stroke="#bdbdbd" stroke-width="1.100"/>
</svg>
<span class="abs" style="left:484.400px;top:8.600px;font-size:8.500px;line-height:10px;font-weight:700;color:#e2e2e2">A</span>
</div>
<div class="abs" style="left:24.500px;top:418px;width:1px;height:25px;background:#131415"></div><div class="abs" style="left:0;top:442px;width:25px;height:1px;background:#0b0b0c;z-index:1"></div>
<div id="mlbar" class="abs">
<div class="abs" style="left:34px;top:1.400px;font-size:12.700px;font-weight:700;line-height:26px;color:#fff;white-space:nowrap">Markups List</div>
<div class="abs" style="left:190.400px;top:5.400px;width:227.800px;height:19.600px;border:1px solid #3c3d40;border-radius:2px;background:#1d1e20"></div>
<div class="abs" style="left:212.400px;top:1.400px;font-size:10.500px;line-height:26.400px;color:#d8d8d8">Search</div>
<div class="abs" style="left:418.400px;top:0;width:35px;height:26px;background:#1d2635"></div><div class="abs" style="left:414.400px;top:-1.600px;width:40.400px;height:28.600px;border:2px solid #ee3a40"></div>
<svg class="abs" style="left:0;top:0" width="1300" height="27" viewBox="0 441.800 1300 27" fill="none" stroke="#e2e2e2" stroke-width="1.200" stroke-linejoin="round" stroke-linecap="round">
<path d="M119 455.200l3.200 3.200 3.200-3.200M156 455.200l3.200 3.200 3.200-3.200" stroke="#bdbdbd" stroke-width="1.100"/>
<path d="M136.600 451.800h9.200l-3.400 4.600v5l-2.400-1.400v-3.600z"/>
<path d="M170.200 457c3-5.400 10-5.400 13 0c-3 5.400-10 5.400-13 0zM182 451l-10.600 11.600" stroke-width="1.100"/><circle cx="176.700" cy="457" r="1.800" stroke-width="1"/>
<circle cx="200.200" cy="456" r="3.600" stroke="#cfcfcf"/><path d="M203 458.800l3.400 3.600" stroke="#cfcfcf"/>
<path d="M405.400 453.200l7.200 7.200M412.600 453.200l-7.200 7.200" stroke="#d8d8d8"/>
<path d="M430 452.800h7.400M430 456.600h7.400M430 460.400h7.400" stroke="#fff" stroke-width="1.500" stroke-linecap="butt"/><path d="M426.400 452.800h1.800M426.400 456.600h1.800M426.400 460.400h1.800" stroke="#fff" stroke-width="1.500" stroke-linecap="butt"/>
<path d="M441.400 455.200l3 3 3-3" stroke="#d0d0d0" stroke-width="1.100"/>
<path d="M1283.400 451.800l2.600 2.600-2.600 2.600M1287.400 451.800l2.600 2.600-2.600 2.600M8.600 451.800l2.600 2.600-2.600 2.600M12.600 451.800l2.600 2.600-2.600 2.600" stroke-width="1.100"/>
</svg>
<div class="abs" style="left:465px;top:-2.600px;width:28.600px;height:28.600px;border-radius:50%;background:#f74343;box-shadow:1px 1px 2px rgba(0,0,0,.5);color:#fff;font-size:21px;line-height:28.600px;text-align:center">1</div>
</div>
<div id="table" class="abs">
<div class="abs" style="left:0;top:0;width:1259px;height:25px;background:#3d3e40"></div>
<div class="abs" style="left:0.600px;top:23px;width:88.800px;height:1.600px;background:#1e80d4"></div>
<div class="abs" style="left:88.9px;top:0;width:1px;height:25px;background:#58595b"></div><div class="abs" style="left:88.9px;top:24.400px;width:1px;height:204px;background:#38393b"></div>
<div class="abs" style="left:158.9px;top:0;width:1px;height:25px;background:#58595b"></div><div class="abs" style="left:158.9px;top:24.400px;width:1px;height:204px;background:#38393b"></div>
<div class="abs" style="left:288.1px;top:0;width:1px;height:25px;background:#58595b"></div><div class="abs" style="left:288.1px;top:24.400px;width:1px;height:204px;background:#38393b"></div>
<div class="abs" style="left:354.9px;top:0;width:1px;height:25px;background:#58595b"></div><div class="abs" style="left:354.9px;top:24.400px;width:1px;height:204px;background:#38393b"></div>
<div class="abs" style="left:450.1px;top:0;width:1px;height:25px;background:#58595b"></div><div class="abs" style="left:450.1px;top:24.400px;width:1px;height:204px;background:#38393b"></div>
<div class="abs" style="left:506.3px;top:0;width:1px;height:25px;background:#58595b"></div><div class="abs" style="left:506.3px;top:24.400px;width:1px;height:204px;background:#38393b"></div>
<div class="abs" style="left:660.5px;top:0;width:1px;height:25px;background:#58595b"></div><div class="abs" style="left:660.5px;top:24.400px;width:1px;height:204px;background:#38393b"></div>
<div class="abs" style="left:716.1px;top:0;width:1px;height:25px;background:#58595b"></div><div class="abs" style="left:716.1px;top:24.400px;width:1px;height:204px;background:#38393b"></div>
<div class="abs" style="left:750.8px;top:0;width:1px;height:25px;background:#58595b"></div><div class="abs" style="left:750.8px;top:24.400px;width:1px;height:204px;background:#38393b"></div>
<div class="abs" style="left:821.2px;top:0;width:1px;height:25px;background:#58595b"></div><div class="abs" style="left:821.2px;top:24.400px;width:1px;height:204px;background:#38393b"></div>
<div class="abs" style="left:891.5px;top:0;width:1px;height:25px;background:#58595b"></div><div class="abs" style="left:891.5px;top:24.400px;width:1px;height:204px;background:#38393b"></div>
<div class="abs" style="left:961.8px;top:0;width:1px;height:25px;background:#58595b"></div><div class="abs" style="left:961.8px;top:24.400px;width:1px;height:204px;background:#38393b"></div>
<div class="abs" style="left:1031.8px;top:0;width:1px;height:25px;background:#58595b"></div><div class="abs" style="left:1031.8px;top:24.400px;width:1px;height:204px;background:#38393b"></div>
<div class="abs th" style="left:22.0px">Subject</div>
<div class="abs th" style="left:96.0px">Page Label</div>
<div class="abs th" style="left:166.4px">Status</div>
<div class="abs th" style="left:296.0px">Author</div>
<div class="abs th" style="left:363.0px">Date</div>
<div class="abs th" style="left:512.0px">Comments</div>
<div class="abs th" style="left:667.0px">Wall Area</div>
<div class="abs th" style="left:723.4px">Me...</div>
<div class="abs th" style="left:758.3px">Capture</div>
<div class="abs th" style="left:828.8px">Material</div>
<div class="abs th" style="left:898.8px">Subtotal</div>
<div class="abs th" style="left:969.4px">Responsib...</div>
<div class="abs tr" style="top:25.0px"><span style="left:47.400px">Floori</span><span style="left:91px">Layout1</span><span style="left:290.600px">ndecker</span><span style="left:358px">7/6/2016 9:38:41</span><i style="left:474px;top:3px"></i><span style="left:509px">9,266 sf</span><span style="left:600px;width:112px;text-align:right">305 sf</span><span style="left:719.400px">9,26...</span><span style="left:860px;width:98.800px;text-align:right">$21,033.82</span><span style="left:964.600px;top:1px">K Vaughan</span><svg class="abs" style="left:31px;top:-0.500px" width="16" height="16" viewBox="0 0 16 16" fill="none"><path d="M1.300 2.300v12.600M1.300 2.300h13" stroke="#7b55c7" stroke-width="1.400" stroke-dasharray="1.100 1.100"/><path d="M4 14.800v-5l4.600-4.800h5.800v9.800z" stroke="#dedede" stroke-width="1.200"/></svg></div>
<div class="abs tr" style="top:44.7px"><span style="left:47.400px">Floori</span><span style="left:91px">Layout1</span><span style="left:290.600px">ndecker</span><span style="left:358px">7/6/2016 9:38:41</span><i style="left:474px;top:3px"></i><span style="left:509px">109 sf</span><span style="left:600px;width:112px;text-align:right">29 sf</span><span style="left:719.400px">109 sf</span><span style="left:860px;width:98.800px;text-align:right">$485.05</span><span style="left:964.600px;top:1px">K Vaughan</span><svg class="abs" style="left:31px;top:-0.500px" width="16" height="16" viewBox="0 0 16 16" fill="none"><path d="M1.300 2.300v12.600M1.300 2.300h13" stroke="#7b55c7" stroke-width="1.400" stroke-dasharray="1.100 1.100"/><path d="M4 14.800v-5l4.600-4.800h5.800v9.800z" stroke="#dedede" stroke-width="1.200"/></svg></div>
<div class="abs tr" style="top:64.3px"><span style="left:47.400px">Floori</span><span style="left:91px">Layout1</span><span style="left:290.600px">ndecker</span><span style="left:358px">7/6/2016 9:38:41</span><i style="left:474px;top:3px"></i><span style="left:509px">121 sf</span><span style="left:600px;width:112px;text-align:right">29 sf</span><span style="left:719.400px">121 sf</span><span style="left:860px;width:98.800px;text-align:right">$538.45</span><span style="left:964.600px;top:1px">K Vaughan</span><svg class="abs" style="left:31px;top:-0.500px" width="16" height="16" viewBox="0 0 16 16" fill="none"><path d="M1.300 2.300v12.600M1.300 2.300h13" stroke="#7b55c7" stroke-width="1.400" stroke-dasharray="1.100 1.100"/><path d="M4 14.800v-5l4.600-4.800h5.800v9.800z" stroke="#dedede" stroke-width="1.200"/></svg></div>
<div class="abs tr" style="top:84.0px"><span style="left:47.400px">Floori</span><span style="left:91px">Layout1</span><span style="left:290.600px">ndecker</span><span style="left:358px">7/6/2016 9:38:41</span><i style="left:474px;top:3px"></i><span style="left:509px">113 sf</span><span style="left:600px;width:112px;text-align:right">29 sf</span><span style="left:719.400px">113 sf</span><span style="left:860px;width:98.800px;text-align:right">$502.85</span><span style="left:964.600px;top:1px">K Vaughan</span><svg class="abs" style="left:31px;top:-0.500px" width="16" height="16" viewBox="0 0 16 16" fill="none"><path d="M1.300 2.300v12.600M1.300 2.300h13" stroke="#7b55c7" stroke-width="1.400" stroke-dasharray="1.100 1.100"/><path d="M4 14.800v-5l4.600-4.800h5.800v9.800z" stroke="#dedede" stroke-width="1.200"/></svg></div>
<div class="abs tr" style="top:103.6px"><span style="left:47.400px">Floori</span><span style="left:91px">Layout1</span><span style="left:290.600px">ndecker</span><span style="left:358px">7/6/2016 9:38:41</span><i style="left:474px;top:3px"></i><span style="left:509px">125 sf</span><span style="left:600px;width:112px;text-align:right">30 sf</span><span style="left:719.400px">125 sf</span><span style="left:860px;width:98.800px;text-align:right">$556.25</span><span style="left:964.600px;top:1px">K Vaughan</span><svg class="abs" style="left:31px;top:-0.500px" width="16" height="16" viewBox="0 0 16 16" fill="none"><path d="M1.300 2.300v12.600M1.300 2.300h13" stroke="#7b55c7" stroke-width="1.400" stroke-dasharray="1.100 1.100"/><path d="M4 14.800v-5l4.600-4.800h5.800v9.800z" stroke="#dedede" stroke-width="1.200"/></svg></div>
<div class="abs tr" style="top:123.3px"><span style="left:47.400px">Floori</span><span style="left:91px">Layout1</span><span style="left:290.600px">ndecker</span><span style="left:358px">7/6/2016 9:38:41</span><i style="left:474px;top:3px"></i><span style="left:509px">122 sf</span><span style="left:600px;width:112px;text-align:right">30 sf</span><span style="left:719.400px">122 sf</span><span style="left:860px;width:98.800px;text-align:right">$542.90</span><span style="left:964.600px;top:1px">K Vaughan</span><svg class="abs" style="left:31px;top:-0.500px" width="16" height="16" viewBox="0 0 16 16" fill="none"><path d="M1.300 2.300v12.600M1.300 2.300h13" stroke="#7b55c7" stroke-width="1.400" stroke-dasharray="1.100 1.100"/><path d="M4 14.800v-5l4.600-4.800h5.800v9.800z" stroke="#dedede" stroke-width="1.200"/></svg></div>
<div class="abs tr" style="top:143.0px"><span style="left:47.400px">Floori</span><span style="left:91px">Layout1</span><span style="left:290.600px">ndecker</span><span style="left:358px">7/6/2016 9:38:41</span><i style="left:474px;top:3px"></i><span style="left:509px">153 sf</span><span style="left:600px;width:112px;text-align:right">33 sf</span><span style="left:719.400px">153 sf</span><span style="left:860px;width:98.800px;text-align:right">$680.85</span><span style="left:964.600px;top:1px">K Vaughan</span><svg class="abs" style="left:31px;top:-0.500px" width="16" height="16" viewBox="0 0 16 16" fill="none"><path d="M1.300 2.300v12.600M1.300 2.300h13" stroke="#7b55c7" stroke-width="1.400" stroke-dasharray="1.100 1.100"/><path d="M4 14.800v-5l4.600-4.800h5.800v9.800z" stroke="#dedede" stroke-width="1.200"/></svg></div>
<div class="abs tr" style="top:162.6px"><span style="left:47.400px">Floori</span><span style="left:91px">Layout1</span><span style="left:290.600px">ndecker</span><span style="left:358px">7/6/2016 9:38:41</span><i style="left:474px;top:3px"></i><span style="left:509px">121 sf</span><span style="left:600px;width:112px;text-align:right">29 sf</span><span style="left:719.400px">121 sf</span><span style="left:860px;width:98.800px;text-align:right">$538.45</span><span style="left:964.600px;top:1px">K Vaughan</span><svg class="abs" style="left:31px;top:-0.500px" width="16" height="16" viewBox="0 0 16 16" fill="none"><path d="M1.300 2.300v12.600M1.300 2.300h13" stroke="#7b55c7" stroke-width="1.400" stroke-dasharray="1.100 1.100"/><path d="M4 14.800v-5l4.600-4.800h5.800v9.800z" stroke="#dedede" stroke-width="1.200"/></svg></div>
<div class="abs tr" style="top:182.3px"><span style="left:47.400px">Floori</span><span style="left:91px">Layout1</span><span style="left:290.600px">ndecker</span><span style="left:358px">7/6/2016 9:38:41</span><i style="left:474px;top:3px"></i><span style="left:509px">240 sf</span><span style="left:600px;width:112px;text-align:right">43 sf</span><span style="left:719.400px">240 sf</span><span style="left:860px;width:98.800px;text-align:right">$1,068.00</span><span style="left:964.600px;top:1px">K Vaughan</span><svg class="abs" style="left:31px;top:-0.500px" width="16" height="16" viewBox="0 0 16 16" fill="none"><path d="M1.300 2.300v12.600M1.300 2.300h13" stroke="#7b55c7" stroke-width="1.400" stroke-dasharray="1.100 1.100"/><path d="M4 14.800v-5l4.600-4.800h5.800v9.800z" stroke="#dedede" stroke-width="1.200"/></svg></div>
<div class="abs tr" style="top:201.9px"><span style="left:47.400px">Floori</span><span style="left:91px">Layout1</span><span style="left:290.600px">ndecker</span><span style="left:358px">7/6/2016 9:38:41</span><i style="left:474px;top:3px"></i><span style="left:509px">120 sf</span><span style="left:600px;width:112px;text-align:right">29 sf</span><span style="left:719.400px">120 sf</span><span style="left:860px;width:98.800px;text-align:right">$534.00</span><span style="left:964.600px;top:1px">K Vaughan</span><svg class="abs" style="left:31px;top:-0.500px" width="16" height="16" viewBox="0 0 16 16" fill="none"><path d="M1.300 2.300v12.600M1.300 2.300h13" stroke="#7b55c7" stroke-width="1.400" stroke-dasharray="1.100 1.100"/><path d="M4 14.800v-5l4.600-4.800h5.800v9.800z" stroke="#dedede" stroke-width="1.200"/></svg></div>
<div class="abs tr" style="top:221.6px"><span style="left:47.400px">Floori</span><span style="left:91px">Layout1</span><span style="left:290.600px">ndecker</span><span style="left:358px">7/6/2016 9:38:41</span><i style="left:474px;top:3px"></i><span style="left:509px">120 sf</span><span style="left:600px;width:112px;text-align:right">29 sf</span><span style="left:719.400px">120 sf</span><span style="left:860px;width:98.800px;text-align:right">$534.00</span><span style="left:964.600px;top:1px">K Vaughan</span><svg class="abs" style="left:31px;top:-0.500px" width="16" height="16" viewBox="0 0 16 16" fill="none"><path d="M1.300 2.300v12.600M1.300 2.300h13" stroke="#7b55c7" stroke-width="1.400" stroke-dasharray="1.100 1.100"/><path d="M4 14.800v-5l4.600-4.800h5.800v9.800z" stroke="#dedede" stroke-width="1.200"/></svg></div>
<svg class="abs" style="left:0;top:0" width="1275" height="25" viewBox="25 471 1275 25" fill="none" stroke="#e2e2e2" stroke-width="1" stroke-linecap="round" stroke-linejoin="round">
<path d="M29.400 479.600h7v7.400h-7zM31.200 483.300h3.400M32.900 481.600v3.400" stroke-width=".9"/>
<path d="M100 484.800l3.200-3.200 3.200 3.200" stroke="#cfcfcf" stroke-width="1.100"/>
<path d="M298 478.200v10.400M301.800 478.200v10.400M305.600 478.200v10.400" stroke-width="1"/><circle cx="298" cy="481.400" r="1.100" fill="#3d3e40"/><circle cx="301.800" cy="485.600" r="1.100" fill="#3d3e40"/><circle cx="305.600" cy="480.600" r="1.100" fill="#3d3e40"/>
</svg>
<div class="abs" style="left:1260.400px;top:0;width:13.600px;height:228px;background:#f0f0f0"><div class="abs" style="left:0;top:19.800px;width:13.600px;height:56.200px;background:#c9c9c9"></div><svg class="abs" style="left:0;top:0" width="14" height="228" viewBox="0 0 14 228" fill="none" stroke="#404040" stroke-width="1.300"><path d="M3.400 11.400l3.400-3.400 3.400 3.400M3.400 216.600l3.400 3.400 3.400-3.400"/></svg></div>
</div>
<div id="menu" class="abs"><div class="abs" style="left:0;top:38.200px;width:124px;height:16.600px;background:#14588c"></div>
<span style="top:2.6px">CSV Summary</span>
<span style="top:20.9px">XML Summary</span>
<span style="top:39.2px">PDF Summary</span>
<span style="top:57.5px">Print Summary</span>
<svg class="abs" style="left:2px;top:56px" width="16" height="16" viewBox="0 0 16 16" fill="none" stroke="#e2e2e2" stroke-width="1.100" stroke-linejoin="round"><path d="M4 5.600v-3.400h8v3.400M3.600 11.600h-2v-6h12.800v6h-2M4 8.600h8v5.600h-8z"/></svg>
</div>
<svg class="abs" style="left:540px;top:500px" width="190" height="75" viewBox="540 500 190 75"><defs><filter id="sh" x="-10%" y="-10%" width="130%" height="130%"><feDropShadow dx="1" dy="1.500" stdDeviation="1" flood-opacity=".45"/></filter></defs><g filter="url(#sh)"><path d="M552 517.600L573.800 512.400L571.400 518.200L693.200 545.300L690.800 555.500L569.800 525.600L568.900 532Z" fill="#f74343"/><circle cx="703" cy="553" r="14.400" fill="#f74343"/></g><text x="703" y="560.400" font-family="Liberation Sans, sans-serif" font-size="21" fill="#fff" text-anchor="middle">2</text></svg>
<div id="status" class="abs"><div class="abs" style="left:1px;top:0;font-size:10.500px;line-height:22px;color:#e6e6e6;white-space:nowrap">Drag control points to resize, or drag area measurement to move</div>
<div class="abs" style="left:1151.700px;top:0;font-size:10.500px;line-height:22px;color:#e6e6e6;white-space:nowrap;letter-spacing:-.2px">36.00 x 24.00 in</div>
<div class="abs" style="left:1263.700px;top:0;font-size:10.500px;line-height:22px;color:#e6e6e6;white-space:nowrap;letter-spacing:-.15px">(29.17, 13.38)</div>
<svg class="abs" style="left:970px;top:0" width="170" height="24" viewBox="970 699.600 170 24" fill="none" stroke="#e2e2e2" stroke-width="1" stroke-linecap="round" stroke-linejoin="round">
<path d="M979.400 705.400v11.400M982.700 705.400v11.400M986 705.400v11.400M977 707.800h11.600M977 711.100h11.600M977 714.400h11.600"/>
<path d="M1004.400 705.400v11.400M1007.700 705.400v5M1011 705.400v4M1002 707.800h11.400M1002 711.100h5M1002 714.400h4"/><path d="M1008.4 711.2h2.600a2.700 2.700 0 0 1 0 5.400h-2.600" stroke-width="2.100" stroke-linecap="butt"/>
<path d="M1036.400 709.600v-1l-3.200-3.200h-4.400v11.800h4M1033.200 705.400v3.200h3.200"/><path d="M1034 711.2h2.600a2.700 2.700 0 0 1 0 5.400h-2.600" stroke-width="2.100" stroke-linecap="butt"/>
<path d="M1054 716.200l1-3 7.600-7.400 2.200 2.200-2 2M1054 716.200l3-1" /><path d="M1060 711.2h2.600a2.700 2.700 0 0 1 0 5.400h-2.600" stroke-width="2.100" stroke-linecap="butt"/>
<path d="M1078.600 716.200l1-3 7.600-7.400 2.200 2.200-1.600 1.600M1078.600 716.200l3-1"/><path d="M1090.400 712.400a3.300 3.300 0 1 1-3.600-2M1086.600 708.800l1.400 1.600-1.800 1.200" stroke="#1e8ae6" stroke-width="1.200"/>
<rect x="1103.600" y="705.600" width="12" height="12" stroke-width="1.200"/><path d="M1103.600 707.400h12" stroke-width="1.400"/><path d="M1106 711h7.400l-2-1.600M1113.400 714.400h-7.400l2 1.600" stroke-width="1"/><path d="M1124.200 710l3.200 3.200 3.200-3.200" stroke="#bdbdbd" stroke-width="1.100"/>
</svg></div>
<div id="taskbar" class="abs">
<div class="abs" style="left:42.400px;top:0;width:302.200px;height:35px;background:#f2f2f2"></div>
<div class="abs" style="left:77.600px;top:0;font-size:12.300px;line-height:36.400px;color:#4a4a4a;white-space:nowrap;letter-spacing:-.1px">Type here to search</div>
<div class="abs" style="left:765.800px;top:0;width:49.400px;height:35px;background:#343434"></div>
<div class="abs" style="left:427.7px;top:33.300px;width:42.1px;height:1.700px;background:#8cc4ec"></div>
<div class="abs" style="left:547px;top:33.300px;width:42.4px;height:1.700px;background:#8cc4ec"></div>
<div class="abs" style="left:765.8px;top:33.300px;width:49.4px;height:1.700px;background:#8cc4ec"></div>
<div class="abs" style="left:853.5px;top:33.300px;width:42.0px;height:1.700px;background:#8cc4ec"></div>
<div class="abs" style="left:902px;top:33.300px;width:42.6px;height:1.700px;background:#8cc4ec"></div>
<div class="abs" style="left:952px;top:33.300px;width:43.0px;height:1.700px;background:#8cc4ec"></div>
<div class="abs" style="left:453.4px;top:0;font-size:10.500px;line-height:36px;color:#fff;white-space:nowrap">In...</div>
<div class="abs" style="left:573px;top:0;font-size:10.500px;line-height:36px;color:#fff;white-space:nowrap">R...</div>
<div class="abs" style="left:795px;top:0;font-size:10.500px;line-height:36px;color:#fff;white-space:nowrap">E...</div>
<div class="abs" style="left:878.6px;top:0;font-size:10.500px;line-height:36px;color:#fff;white-space:nowrap">T...</div>
<div class="abs" style="left:928px;top:0;font-size:10.500px;line-height:36px;color:#fff;white-space:nowrap">S...</div>
<div class="abs" style="left:978px;top:0;font-size:10.500px;line-height:36px;color:#fff;white-space:nowrap">S...</div>
<div class="abs" style="left:1240px;top:3px;width:68px;text-align:center;font-size:10.600px;line-height:14px;color:#fff;white-space:nowrap">9:16 PM</div>
<div class="abs" style="left:1240px;top:18.400px;width:68px;text-align:center;font-size:10.600px;line-height:14px;color:#fff;white-space:nowrap">9/2/2018</div>
<div class="abs" style="left:1345.600px;top:0;width:1px;height:35px;background:#555"></div>
<svg class="abs" style="left:0;top:0" width="1350" height="35" viewBox="0 724 1350 35" fill="none" stroke-linejoin="round" stroke-linecap="round" font-family="Liberation Sans, sans-serif">
<path d="M14 736l6-.900v6.200h-6zM20.800 735l7.400-1.100v7.400h-7.400zM14 742.100h6v6.200l-6-.900zM20.800 742.100h7.400v7.400l-7.400-1.100z" fill="#fff"/>
<circle cx="59.700" cy="741.600" r="7.600" stroke="#111" stroke-width="2"/>
<path d="M324.400 736.600a1.800 1.800 0 0 1 3.600 0v4.400a1.800 1.800 0 0 1-3.600 0zM322.400 740.600c0 5 7.600 5 7.600 0M326.200 744.600v2.400" stroke="#444" stroke-width="1.100"/>
<path d="M360.600 736.800h8.400v8h-8.400zM358.400 735.200v1.600M371.200 735.200v1.600M360.600 734.600h8.400M360.600 747h8.400M358.400 745v1.600M372.600 738.600v4.600" stroke="#eee" stroke-width="1.100"/>
<path d="M396 736.400l10.500-3.400l10.500 3.400v12.400h-21z" fill="#fff"/><path d="M396.400 737l12 7.400l8.400-5.400" stroke="#0c0c0c" stroke-width="1.400"/>
<rect x="438" y="734" width="12" height="11" fill="#1565c0"/><path d="M439 735.600l5 3.600l5-3.600" stroke="#fff" stroke-width="1"/><rect x="430" y="732.200" width="11" height="15" fill="#0a6cc8"/><text x="435.500" y="743.400" font-size="9.500" font-weight="700" fill="#fff" text-anchor="middle">o</text>
<rect x="438.400" y="744.400" width="12.400" height="8.400" fill="#f0b85a" stroke="#c98a28" stroke-width=".6"/><path d="M438.600 744.800l6 4l6-4" stroke="#fff" stroke-width=".9"/>
<path d="M484 741c.6-5 4-8 8.400-8c4.600 0 7.800 3.200 7.800 8.200v1.400h-11.400c.4 2.800 2.600 4.200 5.600 4.200c2 0 3.800-.5 5.200-1.400v3.800c-1.800 1-3.800 1.500-6.200 1.500c-5.600 0-9-3.400-9-8c0-2.800 1.300-5 3.500-6.400c-1 1.100-1.500 2.500-1.700 3.900h8.600c0-2.600-1.400-4.400-4-4.400c-3 0-5.600 2.200-6.800 5.200z" fill="#1e82dc"/>
<path d="M516.400 734.400h7l1.600 1.800h10v12.600h-18.600z" fill="#f7d26a"/><path d="M516.400 737.600h18.600v11.200h-18.600z" fill="#fbe08c"/><path d="M521 742.600h9.600v6.200h-9.600z" fill="#3a96dd"/><path d="M523.400 745.600h4.800v3.200h-4.800z" fill="#fbe08c"/>
<circle cx="558.600" cy="741.600" r="9.400" fill="#dd4b3e"/><path d="M558.600 741.600L550.500 736.900A9.400 9.400 0 0 0 558.600 751z" fill="#1da462" transform="rotate(0 558.600 741.600)"/><path d="M558.600 741.600L554 749.800A9.400 9.400 0 0 0 566.700 736.900z" fill="#ffcd40"/><path d="M549.800 738.400A9.400 9.400 0 0 0 555 750.300L558.600 741.600z" fill="#1da462"/><circle cx="558.600" cy="741.600" r="4.300" fill="#f2f2f2"/><circle cx="558.600" cy="741.600" r="3.400" fill="#4a8af4"/>
<path d="M600.400 737h20.400v14h-20.400z" fill="#fff"/><path d="M606.600 737c0-5.600 8-5.600 8 0" stroke="#fff" stroke-width="1.200"/><rect x="606.800" y="740" width="3.400" height="3.400" fill="#f25022"/><rect x="611" y="740" width="3.400" height="3.400" fill="#7fba00"/><rect x="606.800" y="744.200" width="3.400" height="3.400" fill="#00a4ef"/><rect x="611" y="744.200" width="3.400" height="3.400" fill="#ffb900"/>
<rect x="644" y="734" width="11" height="15" fill="#fff" stroke="#1f7244" stroke-width=".8"/><path d="M646 737h8M646 740h8M646 743h8M646 746h8M650 735v13" stroke="#1f7244" stroke-width=".8"/><path d="M635.500 733.400l11-1.800v20l-11-1.800z" fill="#1f7244"/><text x="641" y="745.400" font-size="9.500" font-weight="700" fill="#fff" text-anchor="middle">X</text>
<rect x="678" y="734" width="11" height="15" fill="#fff" stroke="#2b579a" stroke-width=".8"/><path d="M681 737h7M681 740h7M681 743h7M681 746h7" stroke="#2b579a" stroke-width=".8"/><path d="M670 733.400l11-1.800v20l-11-1.800z" fill="#2b579a"/><text x="675.500" y="745.200" font-size="9" font-weight="700" fill="#fff" text-anchor="middle">W</text>
<rect x="712.600" y="734" width="11" height="15" fill="#f5c4b6" stroke="#d24726" stroke-width=".8"/><circle cx="718.600" cy="739.600" r="3" fill="#d24726"/><path d="M715 745h7M715 747h7" stroke="#d24726" stroke-width=".8"/><path d="M704.800 733.400l11-1.800v20l-11-1.800z" fill="#d24726"/><text x="710.300" y="745.200" font-size="9.500" font-weight="700" fill="#fff" text-anchor="middle">P</text>
<circle cx="748.200" cy="741.600" r="9.200" fill="#fff"/><circle cx="748.200" cy="741.600" r="8" fill="#00aff0"/><circle cx="742.600" cy="735.600" r="4" fill="#00aff0" stroke="#fff" stroke-width="1"/><circle cx="753.800" cy="747.600" r="4" fill="#00aff0" stroke="#fff" stroke-width="1"/><circle cx="748.200" cy="741.600" r="7.200" fill="#00aff0"/><text x="748.200" y="746.400" font-size="13" font-weight="700" fill="#fff" text-anchor="middle">S</text>
<circle cx="781" cy="741.600" r="9.800" fill="#1d86e4"/><path d="M775.600 749.600c0-8 1.600-13.600 7.200-13.600c4.600 0 5.200 5.600-.4 6.600l5.600 6.400M772.400 745.600c3-6.800 9-8.400 13.600-5.600" stroke="#fff" stroke-width="2.200" fill="none"/>
<rect x="830.600" y="734" width="10.600" height="15" fill="#fff" stroke="#80397b" stroke-width=".8"/><path d="M837 736.600h4M837 740h4M837 743.400h4M837 746.800h4" stroke="#80397b" stroke-width="1.600"/><path d="M822 733.400l11-1.800v20l-11-1.800z" fill="#80397b"/><text x="827.500" y="745.200" font-size="9.500" font-weight="700" fill="#fff" text-anchor="middle">N</text>
<rect x="856" y="732.600" width="18" height="18" fill="#e8e8e8"/><path d="M856 732.600h9l-9 18z" fill="#1a1a1a"/><text x="865" y="748.400" font-size="18" font-weight="700" font-family="Liberation Serif, serif" fill="#111" text-anchor="middle" stroke="#fff" stroke-width=".4">S</text>
<rect x="904" y="731.600" width="20.600" height="20.400" rx="2.600" fill="#f0453a"/><path d="M904 746h20.600v3.400a2.600 2.600 0 0 1-2.600 2.600h-15.400a2.600 2.600 0 0 1-2.600-2.600z" fill="#c62d24"/><path d="M919.6 736.600h-8.200c-3.600 0-3.600 5 0 5h5.400c3.600 0 3.600 5.400 0 5.400h-8.400" stroke="#fff" stroke-width="2.600" fill="none" stroke-linecap="butt"/>
<rect x="954" y="731.600" width="20.600" height="20.400" rx="2.600" fill="#3a8fe0"/><path d="M954 746h20.600v3.400a2.600 2.600 0 0 1-2.600 2.600h-15.400a2.600 2.600 0 0 1-2.600-2.600z" fill="#1f6dc0"/><path d="M969.6 736.600h-8.200c-3.600 0-3.600 5 0 5h5.400c3.600 0 3.600 5.400 0 5.400h-8.400" stroke="#fff" stroke-width="2.600" fill="none" stroke-linecap="butt"/>
<circle cx="1030" cy="737.600" r="2.300" stroke="#f0f0f0" stroke-width="1"/><path d="M1026.400 746c0-5 7.400-5 7.400 0" stroke="#f0f0f0" stroke-width="1"/><circle cx="1024" cy="741.600" r="1.900" stroke="#f0f0f0" stroke-width="1"/><path d="M1020.800 748.400c0-4.400 6.400-4.400 6.400 0" stroke="#f0f0f0" stroke-width="1"/>
<path d="M1056.400 744.400l5.400-5.400 5.400 5.400" stroke="#f0f0f0" stroke-width="1.200"/>
<path d="M1085 746.400c-3.200 0-3.600-4.400-.4-4.800c.4-3 4.400-3.600 5.600-1c1.400-2 5-1 4.800 1.600c2.800.2 2.800 4.200 0 4.200z" fill="#1e82dc"/><path d="M1113.6 746.400c-3.200 0-3.600-4.400-.4-4.800c.4-3 4.400-3.600 5.600-1c1.400-2 5-1 4.800 1.600c2.800.2 2.800 4.200 0 4.200z" fill="#fff"/>
<path d="M1143.600 736.200l3.800 2.400-3.800 2.400-3.800-2.400zM1151.600 736.200l3.800 2.400-3.800 2.400-3.800-2.400zM1143.600 741.200l3.800 2.400-3.800 2.400-3.800-2.400zM1151.600 741.200l3.800 2.400-3.800 2.400-3.800-2.400zM1147.600 744.600l3 2-3 2-3-2z" fill="#fff"/>
<rect x="1169" y="738.400" width="12.400" height="6.400" fill="#f0f0f0"/><path d="M1182.200 740.200v2.800" stroke="#f0f0f0" stroke-width="1.200"/><circle cx="1168.600" cy="738" r="1.600" fill="#0c0c0c" stroke="#f0f0f0" stroke-width=".8"/>
<path d="M1198.400 747.400a3.800 3.800 0 0 1 5-5" stroke="#f0f0f0" stroke-width="1"/><path d="M1196 747.400a6.400 6.400 0 0 1 8-7.600M1193.600 747.400a8.800 8.800 0 0 1 11.200-10" stroke="#8a8a8a" stroke-width="1"/><circle cx="1204.400" cy="747" r="1" fill="#f0f0f0"/>
<path d="M1223.600 739.600h2.400l3-2.800v9.600l-3-2.800h-2.400z" stroke="#f0f0f0" stroke-width="1"/><path d="M1231.400 739c1.400 1.400 1.400 4 0 5.400" stroke="#f0f0f0" stroke-width="1"/><path d="M1233.600 737c2.600 2.600 2.600 6.800 0 9.400M1235.800 735.200c3.600 3.600 3.600 9.400 0 13" stroke="#777" stroke-width="1"/>
<path d="M1315 735h13v10.600h-8.600l-2.600 2.600v-2.600h-1.800z" fill="#f0f0f0"/><path d="M1317.400 738h8.400M1317.400 740.400h8.400M1317.400 742.800h5" stroke="#0c0c0c" stroke-width=".9"/><circle cx="1327" cy="746" r="3" fill="#0c0c0c" stroke="#f0f0f0" stroke-width=".9"/>
</svg></div>
</body></html>
